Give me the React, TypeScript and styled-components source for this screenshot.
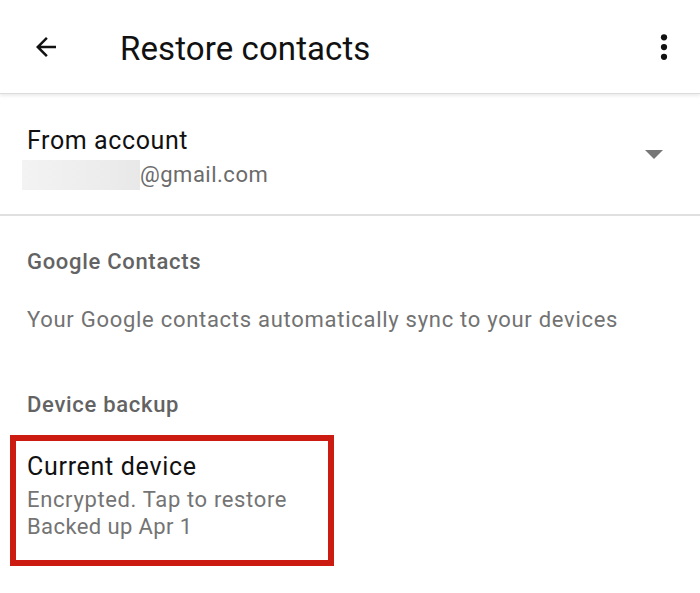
import React from "react";
import styled, { createGlobalStyle } from "styled-components";

const Global = createGlobalStyle`
  html, body { margin: 0; padding: 0; background: #ffffff; }
  body { font-family: Roboto, "Noto Sans", Arial, sans-serif; width: 700px; height: 593px; overflow: hidden; }
`;

const Page = styled.div`
  width: 700px;
  height: 593px;
  display: flex;
  flex-direction: column;
  background: #fff;
`;

const Toolbar = styled.header`
  height: 94px;
  display: flex;
  align-items: center;
  padding: 0 10px 0 20px;
  box-sizing: border-box;
  border-bottom: 1px solid #dcdcdc;
  box-shadow: 0 2px 3px rgba(0, 0, 0, 0.08);
  position: relative;
  z-index: 1;
`;

const IconButton = styled.button`
  width: 52px;
  height: 52px;
  border: 0;
  background: none;
  padding: 0;
  display: flex;
  align-items: center;
  justify-content: center;
  color: #111;
`;

const Title = styled.h1`
  margin: 4px 0 0 48px;
  flex: 1;
  font-size: 33px;
  font-weight: 400;
  color: #111;
  letter-spacing: 0.1px;
`;

const AccountRow = styled.div`
  height: 122px;
  box-sizing: border-box;
  border-bottom: 2px solid #e0e0e0;
  display: flex;
  align-items: center;
  padding: 0 37px 0 27px;
`;

const AccountText = styled.div`
  flex: 1;
  display: flex;
  flex-direction: column;
  gap: 3px;
  margin-top: 7px;
`;

const Primary = styled.div`
  font-size: 25px;
  color: #111;
  line-height: 32px;
  letter-spacing: 0.6px;
`;

const EmailLine = styled.div`
  display: flex;
  align-items: center;
  font-size: 22px;
  color: #6b6b6b;
  line-height: 30px;
  letter-spacing: 0.5px;
`;

const Redacted = styled.span`
  display: inline-block;
  width: 118px;
  height: 30px;
  margin-left: -5px;
  background: linear-gradient(90deg, #f3f3f3, #ececec 70%, #e8e8e8);
`;

const Caret = styled.div`
  width: 0;
  height: 0;
  border-left: 9px solid transparent;
  border-right: 9px solid transparent;
  border-top: 9px solid #777;
`;

const Section = styled.section`
  display: flex;
  flex-direction: column;
  padding: 0 27px;
`;

const SectionHeader = styled.div<{ $top: number }>`
  font-size: 22px;
  font-weight: 500;
  color: #636363;
  line-height: 28px;
  letter-spacing: 0.7px;
  margin-top: ${(p) => p.$top}px;
`;

const Body = styled.div`
  font-size: 22px;
  color: #727272;
  line-height: 28px;
  letter-spacing: 0.72px;
  margin-top: 30px;
`;

const Highlight = styled.div`
  margin: 16px 0 0 10px;
  width: 324px;
  height: 131px;
  box-sizing: border-box;
  border: 6px solid #cc1b10;
  padding: 10px 0 0 11px;
  display: flex;
  flex-direction: column;
`;

const DeviceTitle = styled.div`
  font-size: 25px;
  color: #111;
  line-height: 31px;
  letter-spacing: 0.7px;
  margin-bottom: 4px;
`;

const Secondary = styled.div<{ $spacing: number }>`
  font-size: 22px;
  color: #747474;
  line-height: 27px;
  letter-spacing: ${(p) => p.$spacing}px;
`;

export default function App() {
  return (
    <Page>
      <Global />
      <Toolbar>
        <IconButton aria-label="Back">
          <svg width="30" height="30" viewBox="0 0 24 24">
            <path d="M20 11H7.83l5.59-5.59L12 4l-8 8 8 8 1.41-1.41L7.83 13H20v-2z" fill="#111" />
          </svg>
        </IconButton>
        <Title>Restore contacts</Title>
        <IconButton aria-label="More">
          <svg width="30" height="30" viewBox="0 0 24 24">
            <circle cx="12" cy="4.2" r="2.5" fill="#111" />
            <circle cx="12" cy="12" r="2.5" fill="#111" />
            <circle cx="12" cy="19.8" r="2.5" fill="#111" />
          </svg>
        </IconButton>
      </Toolbar>
      <AccountRow>
        <AccountText>
          <Primary>From account</Primary>
          <EmailLine>
            <Redacted />
            @gmail.com
          </EmailLine>
        </AccountText>
        <Caret />
      </AccountRow>
      <Section>
        <SectionHeader $top={32}>Google Contacts</SectionHeader>
        <Body>Your Google contacts automatically sync to your devices</Body>
        <SectionHeader $top={57}>Device backup</SectionHeader>
      </Section>
      <Highlight>
        <DeviceTitle>Current device</DeviceTitle>
        <Secondary $spacing={0.64}>Encrypted. Tap to restore</Secondary>
        <Secondary $spacing={0.4}>Backed up Apr 1</Secondary>
      </Highlight>
    </Page>
  );
}
